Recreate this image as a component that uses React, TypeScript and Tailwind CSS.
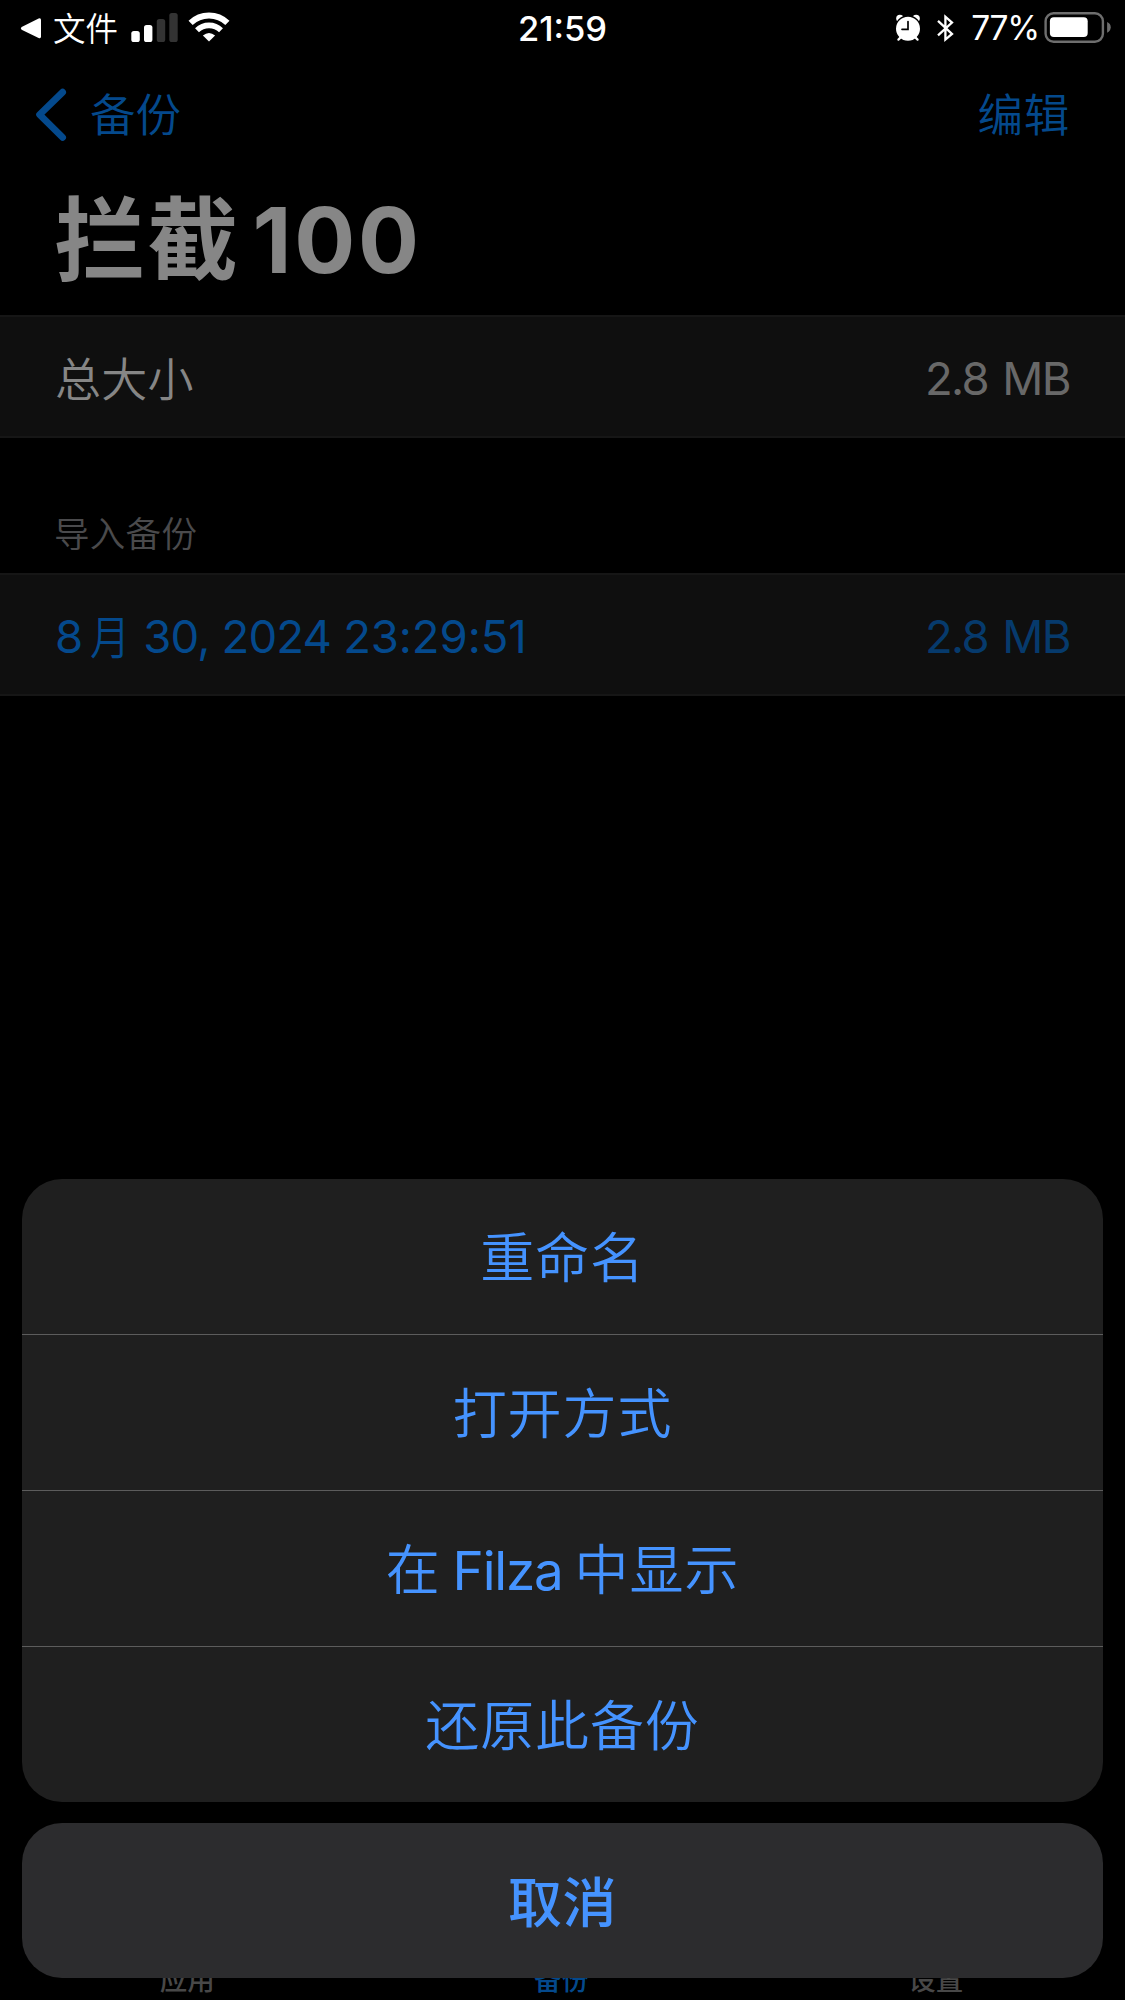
import React from "react";

function BackTriangle() {
  return (
    <svg className="h-[57px] w-[22px]" viewBox="0 0 22 57" fill="#fff">
      <path d="M1.6 27.1 18.6 18.5Q21 17.6 21 20V36.5Q21 39 18.6 38L1.6 29.7Q0 28.4 1.6 27.1Z" />
    </svg>
  );
}

function SignalBars() {
  return (
    <svg className="h-[57px] w-[47px]" viewBox="0 0 47 57">
      <rect x="0.3" y="31" width="8.5" height="11" rx="2.6" fill="#fff" />
      <rect x="13" y="25" width="8.4" height="17" rx="2.6" fill="#fff" />
      <rect x="25.8" y="19" width="8.4" height="23" rx="2.6" fill="#333" />
      <rect x="38.3" y="13" width="8.4" height="29" rx="2.6" fill="#333" />
    </svg>
  );
}

function WifiIcon() {
  return (
    <svg className="h-[57px] w-[42px]" viewBox="0 0 42 57" fill="none" stroke="#fff">
      <path d="M2.6 22.9A26.6 26.6 0 0 1 39.4 22.9" strokeWidth="6" />
      <path d="M9 30.2A17.3 17.3 0 0 1 33 30.2" strokeWidth="5.6" />
      <path d="M21 41.6 14.9 35.6Q21 30.6 27.1 35.6Z" fill="#fff" stroke="none" />
    </svg>
  );
}

function AlarmIcon() {
  return (
    <svg className="h-[57px] w-[26px]" viewBox="0 0 26 57" fill="#fff">
      <circle cx="4.9" cy="18.4" r="3.7" />
      <circle cx="21.1" cy="18.4" r="3.7" />
      <circle cx="13" cy="28.7" r="12.7" stroke="#000" strokeWidth="1.4" />
      <path d="M6.4 36.6 3.4 39.6M19.6 36.6 22.6 39.6" stroke="#fff" strokeWidth="2.2" strokeLinecap="round" />
      <path d="M13 21.6V29.3H7" fill="none" stroke="#000" strokeWidth="1.7" strokeLinecap="round" />
    </svg>
  );
}

function BluetoothIcon() {
  return (
    <svg className="h-[57px] w-[17px]" viewBox="0 0 17 57" fill="none" stroke="#fff" strokeWidth="2.3">
      <path d="M1 20.9 15 34 8.4 39.6V16.7L15 22.6 1 35.4" />
    </svg>
  );
}

function BatteryIcon() {
  return (
    <svg className="h-[57px] w-[68px]" viewBox="0 0 68 57">
      <rect x="1.6" y="13.2" width="57.3" height="28.6" rx="8" fill="none" stroke="#6e6e6e" strokeWidth="2.4" />
      <rect x="5.9" y="17.2" width="37.8" height="19.8" rx="4" fill="#fff" />
      <path d="M63.1 22Q66.7 23.6 66.7 27.3T63.1 32.7Z" fill="#6e6e6e" />
    </svg>
  );
}

function StatusBar() {
  return (
    <header className="grid h-[57px] grid-cols-[1fr_auto_1fr] items-center leading-[57px] text-white">
      <div className="flex items-center pl-5">
        <BackTriangle />
        <span className="ml-[11px] pt-[2px] text-[32.5px] font-[350] leading-[55px]">文件</span>
        <span className="ml-[13px] flex">
          <SignalBars />
        </span>
        <span className="ml-[10px] flex">
          <WifiIcon />
        </span>
      </div>
      <time className="text-[34.5px] font-medium">21:59</time>
      <div className="flex items-center justify-end pr-[13px]">
        <AlarmIcon />
        <span className="ml-4 flex">
          <BluetoothIcon />
        </span>
        <span className="ml-[17px] text-[33.5px] font-[370] tracking-[-1.2px]">77%</span>
        <span className="ml-[5px] flex">
          <BatteryIcon />
        </span>
      </div>
    </header>
  );
}

function NavBar() {
  return (
    <nav className="flex h-[115px] items-center justify-between pl-9 pr-[55px] text-[45.5px] font-[350] leading-[115px] text-[#04498c]">
      <a className="flex items-center">
        <svg className="h-[54px] w-[31px]" viewBox="0 0 31 54" fill="none" stroke="currentColor" strokeWidth="6.8" strokeLinecap="round" strokeLinejoin="round">
          <path d="M26.6 4.2 3.6 26.6 26.6 49.4" />
        </svg>
        <span className="ml-[23px] pt-[2px]">备份</span>
      </a>
      <a className="pt-[2px] tracking-[0.7px]">编辑</a>
    </nav>
  );
}

function Row({ className, children, value }: { className: string; children: React.ReactNode; value: string }) {
  return (
    <div className={`flex h-[123px] items-center justify-between border-y-2 border-[#161616] bg-[#0f0f0f] px-[55px] pt-1 leading-none ${className}`}>
      {children}
      <span className="text-[45.5px] font-[370] tracking-[-1.6px] opacity-75 [word-spacing:3px]">{value}</span>
    </div>
  );
}

function Action({ children }: { children: React.ReactNode }) {
  return (
    <button className="flex h-[155px] w-full items-center justify-center gap-[12px] pt-[5px] text-[54px] font-[350] leading-none tracking-[0.9px]">
      {children}
    </button>
  );
}

function ActionSheet() {
  return (
    <div className="absolute inset-x-[22px] bottom-[22px] flex flex-col gap-[21px] text-[#4593ff]">
      <ul className="divide-y divide-[#5c5c5c] overflow-hidden rounded-[40px] bg-[#1f1f1f]">
        <li><Action>重命名</Action></li>
        <li><Action>打开方式</Action></li>
        <li>
          <Action>
            <span>在</span>
            <span className="text-[53px] font-[380] tracking-[-1.2px]">Filza</span>
            <span>中显示</span>
          </Action>
        </li>
        <li><Action>还原此备份</Action></li>
      </ul>
      <button className="h-[155px] rounded-[40px] bg-[#2c2c2e] pt-[6px] text-[54px] font-medium leading-none tracking-[0.5px]">取消</button>
    </div>
  );
}

function TabBar() {
  return (
    <footer className="absolute inset-x-0 bottom-0 grid h-[39px] grid-cols-3 pr-[2px] text-center text-[27.5px] font-medium leading-[39px] text-[#484848]">
      <span>应用</span>
      <span className="text-[#04498c]">备份</span>
      <span>设置</span>
    </footer>
  );
}

export default function App() {
  return (
    <div className="relative h-[2000px] w-[1125px] overflow-hidden bg-black font-[Inter,'Noto_Sans_CJK_SC',sans-serif]">
      <StatusBar />
      <NavBar />
      <h1 className="flex h-[143px] items-start pl-[54.5px] text-[90.5px] font-bold leading-[136px] text-[#868686]">
        <span className="tracking-[2.5px]">拦截</span>
        <span className="ml-[12px] tracking-[2.7px]">100</span>
      </h1>
      <Row className="text-[#868686]" value="2.8 MB">
        <span className="text-[46px] font-[350] tracking-[0.3px]">总大小</span>
      </Row>
      <h2 className="h-[135px] pl-[54px] pt-[58px] text-[35.5px] font-[350] leading-[77px] tracking-[0.3px] text-[#4a4a4c]">导入备份</h2>
      <Row className="text-[#04498c]" value="2.8 MB">
        <span className="flex text-[45.5px] font-[370]">
          <span>8</span>
          <span className="ml-[7px] w-[53px] origin-left scale-x-[0.87] text-[46px] font-[350]">月</span>
          <span className="whitespace-pre tracking-[-0.8px]">30, 2024 </span>
          <span className="tracking-[-0.1px]">23:29:51</span>
        </span>
      </Row>
      <TabBar />
      <ActionSheet />
    </div>
  );
}
